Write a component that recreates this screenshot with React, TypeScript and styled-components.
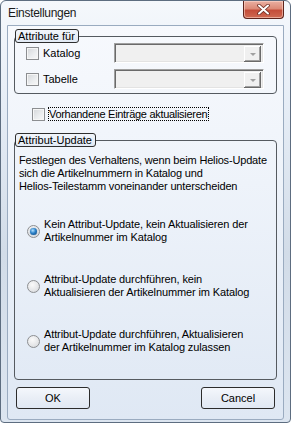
import React from "react";
import styled, {createGlobalStyle} from 'styled-components';

const GlobalStyle = createGlobalStyle`
  body {
    margin: 0;
    font-family: "Liberation Sans", Arial, sans-serif;
    font-size: 11px;
    color: #000;
  }
  * {
    box-sizing: border-box;
  }
`

const Window = styled.div`
  width: 291px;
  height: 423px;
  border: 1px solid #5d6d80;
  border-radius: 6px 6px 4px 4px;
  background: linear-gradient(to bottom, #f5f8fc 0%, #e6edf6 25%, #d2dce8 60%, #dce5f0 100%);
  padding: 0 6px 2px 6px;
  display: flex;
  flex-direction: column;
`

const TitleBar = styled.div`
  height: 24px;
  display: flex;
  align-items: flex-start;
`

const Title = styled.span`
  font-size: 12px;
  letter-spacing: -0.3px;
  color: #1a1a1a;
  margin: 5px 0 0 1px;
`

const CloseButton = styled.div`
  margin-left: auto;
  width: 41px;
  height: 18px;
  border: 1px solid #5e241c;
  border-top: none;
  border-radius: 0 0 4px 4px;
  background: linear-gradient(to bottom, #eab0a2 0%, #dc8a77 45%, #c44d39 55%, #cf6a52 100%);
  box-shadow: inset 0 0 0 1px rgba(255, 220, 210, 0.55);
  display: flex;
  align-items: center;
  justify-content: center;
`

const Client = styled.div`
  flex: 1;
  border: 1px solid #9aabc0;
  border-radius: 0 0 3px 3px;
  background: linear-gradient(to bottom, #f7f9fd 0%, #eef3fa 40%, #dfe8f4 100%);
  padding: 3px 6px 0 6px;
  display: flex;
  flex-direction: column;
`

const Group = styled.fieldset<{$padBottom: number}>`
  margin: 0;
  min-width: 0;
  border: 1px solid #555a60;
  border-radius: 4px;
  padding: 0 0 ${p => p.$padBottom}px 0;
`

const Legend = styled.legend`
  margin-left: 0;
  padding: 0 3px 0 2px;
  border: 1px solid #2e2e2e;
  border-radius: 3px;
  background: linear-gradient(to bottom, #f1f5fb, #e2eaf5);
  line-height: 12px;
  font-size: 11px;
`

const Rows = styled.div`
  display: flex;
  flex-direction: column;
  gap: 6px;
`

const Row = styled.div`
  display: flex;
  align-items: center;
  height: 20px;
  padding: 0 12px 0 11px;
`

const CheckLabel = styled.label`
  display: flex;
  align-items: center;
  gap: 4px;
`

const Box = styled.span`
  width: 13px;
  height: 13px;
  flex: none;
  border: 1px solid #8c8e91;
  background: linear-gradient(135deg, #d4d6d9 0%, #eceef0 60%, #f8f8f8 100%);
  box-shadow: inset 0 0 0 1px #f6f6f6;
`

const Combo = styled.div`
  margin-left: auto;
  width: 150px;
  height: 20px;
  border: 1px solid;
  border-color: #a0a0a0 #ffffff #ffffff #a0a0a0;
  box-shadow: inset 1px 1px 0 #6a6a6a, inset -1px -1px 0 #e3e3e3;
  background: #f0f0f0;
  display: flex;
  justify-content: flex-end;
  padding: 2px 2px 2px 2px;
`

const DropButton = styled.div`
  width: 17px;
  height: 16px;
  background: #f0f0f0;
  box-shadow: inset -1px -1px 0 #6a6a6a, inset 1px 1px 0 #ffffff, inset -2px -2px 0 #a0a0a0;
  display: flex;
  align-items: center;
  justify-content: center;

  &::after {
    content: "";
    border-left: 3px solid transparent;
    border-right: 3px solid transparent;
    border-top: 3px solid #a0a0a0;
    margin-top: 1px;
  }
`

const UpdateRow = styled.label`
  display: flex;
  align-items: center;
  margin: 13px 0 12px 18px;
  gap: 3px;
`

const Focus = styled.span`
  border: 1px dotted #000;
  padding: 0 1px 0 0;
  line-height: 12px;
  letter-spacing: -0.3px;
`

const Text = styled.p`
  margin: 7px 0 0 4px;
  line-height: 13px;
  letter-spacing: -0.17px;
`

const Option = styled.label<{$top: number}>`
  display: flex;
  align-items: center;
  gap: 4px;
  margin: ${p => p.$top}px 0 0 12px;
  line-height: 13px;
  letter-spacing: -0.12px;
`

const Radio = styled.span<{$checked?: boolean}>`
  width: 13px;
  height: 13px;
  flex: none;
  border-radius: 50%;
  border: 1px solid #8c8e91;
  background: radial-gradient(circle at 40% 35%, #fafafa 0%, #e4e5e7 60%, #d0d2d5 100%);
  display: flex;
  align-items: center;
  justify-content: center;

  &::after {
    content: "";
    display: ${p => p.$checked ? 'block' : 'none'};
    width: 7px;
    height: 7px;
    border-radius: 50%;
    background: radial-gradient(circle at 40% 35%, #b4e2ff 0%, #2a80c8 45%, #0b3f73 100%);
    box-shadow: 0 0 1px #1a5f9e;
  }
`

const ButtonRow = styled.div`
  display: flex;
  justify-content: space-between;
  margin-top: 7px;
  padding: 0 2px;
`

const Button = styled.button`
  width: 74px;
  height: 22px;
  border: 1px solid #2c2c2c;
  border-radius: 3px;
  background: linear-gradient(to bottom, #f4f7fc 0%, #e9eef6 50%, #e0e8f3 100%);
  font-family: "Liberation Sans", Arial, sans-serif;
  font-size: 11px;
  color: #000;
  padding: 0;
`

const CloseIcon = () => (
  <svg width="13" height="11" viewBox="0 0 13 11">
    <path d="M2 1.5 L11 9.5 M11 1.5 L2 9.5" stroke="#6b2a20" strokeWidth="3.6" strokeLinecap="round" />
    <path d="M2 1.5 L11 9.5 M11 1.5 L2 9.5" stroke="#ffffff" strokeWidth="2" strokeLinecap="round" />
  </svg>
)

const options = [
  {top: 25, text: ['Kein Attribut-Update, kein Aktualisieren der', 'Artikelnummer im Katalog'], checked: true},
  {top: 29, text: ['Attribut-Update durchführen, kein', 'Aktualisieren der Artikelnummer im Katalog'], checked: false},
  {top: 29, text: ['Attribut-Update durchführen, Aktualisieren', 'der Artikelnummer im Katalog zulassen'], checked: false},
]

const App = () => {
  return (
    <>
      <GlobalStyle/>
      <Window>
        <TitleBar>
          <Title>Einstellungen</Title>
          <CloseButton><CloseIcon/></CloseButton>
        </TitleBar>
        <Client>
          <Group $padBottom={4}>
            <Legend>Attribute für</Legend>
            <Rows>
              <Row>
                <CheckLabel><Box/>Katalog</CheckLabel>
                <Combo><DropButton/></Combo>
              </Row>
              <Row>
                <CheckLabel><Box/>Tabelle</CheckLabel>
                <Combo><DropButton/></Combo>
              </Row>
            </Rows>
          </Group>

          <UpdateRow>
            <Box/>
            <Focus>Vorhandene Einträge aktualisieren</Focus>
          </UpdateRow>

          <Group $padBottom={25}>
            <Legend>Attribut-Update</Legend>
            <Text>
              Festlegen des Verhaltens, wenn beim Helios-Update<br/>
              sich die Artikelnummern in Katalog und<br/>
              Helios-Teilestamm voneinander unterscheiden
            </Text>
            {options.map((o, i) => (
              <Option key={i} $top={o.top}>
                <Radio $checked={o.checked}/>
                <span>{o.text[0]}<br/>{o.text[1]}</span>
              </Option>
            ))}
          </Group>

          <ButtonRow>
            <Button>OK</Button>
            <Button>Cancel</Button>
          </ButtonRow>
        </Client>
      </Window>
    </>
  );
};

export default App;
